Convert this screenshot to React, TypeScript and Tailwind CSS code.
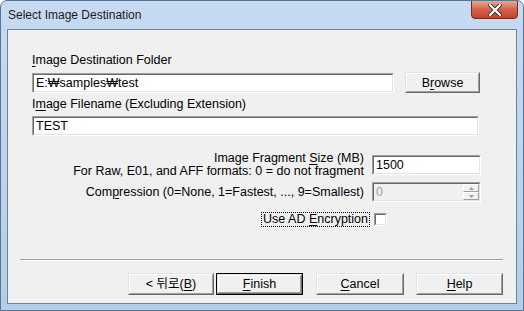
import React from 'react';

const font = { fontFamily: '"Liberation Sans", Arial, "Noto Sans CJK KR", sans-serif' };

const Sunken: React.FC<{ className?: string; inner?: string; children?: React.ReactNode }> = ({ className = '', inner = 'bg-white', children }) => (
  <div className={`border border-t-[#a0a0a0] border-l-[#a0a0a0] border-b-white border-r-white ${className}`}>
    <div className={`h-full border border-t-[#696969] border-l-[#696969] border-b-[#e3e3e3] border-r-[#e3e3e3] ${inner}`}>{children}</div>
  </div>
);

const Raised: React.FC<{ className?: string; children?: React.ReactNode }> = ({ className = '', children }) => (
  <div className={`border border-t-[#e3e3e3] border-l-[#e3e3e3] border-b-[#696969] border-r-[#696969] ${className}`}>
    <div className="h-full border border-t-white border-l-white border-b-[#a0a0a0] border-r-[#a0a0a0] flex items-center justify-center bg-[#f0f0f0]">
      {children}
    </div>
  </div>
);

const U: React.FC<{ children: React.ReactNode }> = ({ children }) => (
  <span className="underline underline-offset-[2px] decoration-1">{children}</span>
);

export default function App() {
  return (
    <div
      style={font}
      className="w-[524px] h-[311px] rounded-t-[7px] border border-[#5b7491] bg-gradient-to-b from-[#c6dbf1] via-[#bcd4ee] to-[#b3cdea] flex flex-col text-[12.5px] text-black leading-[14px] overflow-hidden"
    >
      {/* title bar */}
      <div className="h-[28px] flex items-start justify-between pl-[7px] pr-[5px]">
        <span className="mt-[6px] text-[12px] leading-[16px] text-[#1a1a1a]">Select Image Destination</span>
        <div className="w-[47px] h-[19px] -mt-px rounded-b-[4px] border border-[#7a2a1c] bg-gradient-to-b from-[#e7a795] via-[#d5614a] to-[#c4412b] flex items-center justify-center">
          <svg width="14" height="12" viewBox="0 0 14 12">
            <path d="M2 1 L12 11 M12 1 L2 11" stroke="#3b2a2a" strokeWidth="4" strokeLinecap="square" />
            <path d="M2 1 L12 11 M12 1 L2 11" stroke="#ffffff" strokeWidth="2.2" strokeLinecap="square" />
          </svg>
        </div>
      </div>

      {/* client area */}
      <div className="mx-[6px] mb-[6px] flex-1 border border-[#6f8296] bg-[#f0f0f0] flex flex-col">
        <div className="pl-[24px] pr-[35px]">
          <div className="mt-[23px] h-[14px]">
            <U>I</U>mage Destination Folder
          </div>
          <div className="mt-[5px] flex items-start">
            <Sunken className="w-[362px] h-[20px] mt-px">
              <div className="pl-[2px] leading-[16px]">E:₩samples₩test</div>
            </Sunken>
            <Raised className="ml-[11px] w-[75px] h-[21px]">
              B<U>r</U>owse
            </Raised>
          </div>
          <div className="mt-[4px] h-[14px]">
            I<U>m</U>age Filename (Excluding Extension)
          </div>
          <Sunken className="mt-[5px] w-[447px] h-[20px]">
            <div className="pl-[2px] leading-[16px]">TEST</div>
          </Sunken>

          <div className="mt-[16px] flex justify-end items-center gap-[8px]">
            <div className="text-right leading-[12.5px]">
              <div>
                Image Fragment <U>S</U>ize (MB)
              </div>
              <div>For Raw, E01, and AFF formats: 0 = do not fragment</div>
            </div>
            <Sunken className="w-[109px] h-[20px]">
              <div className="pl-[2px] leading-[16px]">1500</div>
            </Sunken>
          </div>

          <div className="mt-[5px] flex justify-end items-center gap-[8px]">
            <div className="text-right">
              Com<U>p</U>ression (0=None, 1=Fastest, ..., 9=Smallest)
            </div>
            <Sunken className="w-[109px] h-[20px]" inner="bg-[#f0f0f0]">
              <div className="h-full flex">
                <div className="flex-1 pl-[2px] leading-[16px] text-[#a0a0a0]">0</div>
                <div className="w-[16px] flex flex-col">
                  <div className="flex-1 border border-t-white border-l-white border-b-[#a0a0a0] border-r-[#a0a0a0] flex items-center justify-center">
                    <svg width="5" height="3" viewBox="0 0 5 3"><path d="M2.5 0 L5 3 L0 3 Z" fill="#a0a0a0" /></svg>
                  </div>
                  <div className="flex-1 border border-t-white border-l-white border-b-[#a0a0a0] border-r-[#a0a0a0] flex items-center justify-center">
                    <svg width="5" height="3" viewBox="0 0 5 3"><path d="M0 0 L5 0 L2.5 3 Z" fill="#a0a0a0" /></svg>
                  </div>
                </div>
              </div>
            </Sunken>
          </div>

          <div className="mt-[10px] flex justify-end items-center pr-[94px]">
            <div className="border border-dotted border-black px-px leading-[13px]">
              Use AD <U>E</U>ncryption
            </div>
            <Sunken className="ml-[4px] w-[13px] h-[13px]" />
          </div>
        </div>

        <div className="mt-[32px] ml-[12px] mr-[13px] h-[2px] border-t border-[#a0a0a0] border-b border-b-white" />

        <div className="mt-[12px] flex pl-[120px]">
          <Raised className="w-[86px] h-[22px]">
            <span>
              &lt; 뒤로(<U>B</U>)
            </span>
          </Raised>
          <div className="ml-[2px] w-[87px] h-[22px] border border-black">
            <Raised className="h-full">
              <U>F</U>inish
            </Raised>
          </div>
          <Raised className="ml-[13px] w-[88px] h-[22px]">
            <U>C</U>ancel
          </Raised>
          <Raised className="ml-[12px] w-[87px] h-[22px]">
            <U>H</U>elp
          </Raised>
        </div>
      </div>
    </div>
  );
}
